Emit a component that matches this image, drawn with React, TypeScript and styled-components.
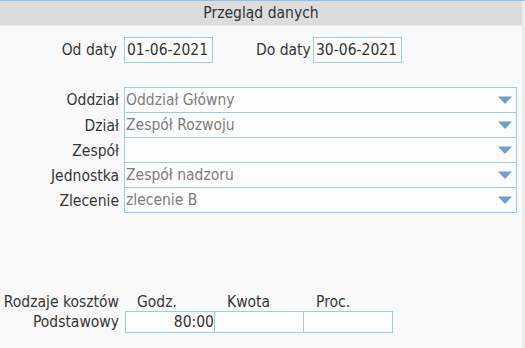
import React from "react";
import styled, { createGlobalStyle } from "styled-components";

const Global = createGlobalStyle`
  html, body { margin: 0; padding: 0; background: #f9f9f9; }
  body {
    font-family: "DejaVu Sans Condensed", "DejaVu Sans", sans-serif;
    font-stretch: semi-condensed;
    font-size: 15.5px;
    line-height: 18px;
    color: #363636;
  }
`;

const Frame = styled.div`
  width: 525px;
  height: 348px;
  box-sizing: border-box;
  border-top: 1px solid #8cc2ee;
  display: flex;
  overflow: hidden;
`;

const Main = styled.div`
  flex: 1;
  display: flex;
  flex-direction: column;
  background: #f9f9f9;
`;

const ScrollStrip = styled.div`
  width: 3px;
  background: #ececec;
`;

const Header = styled.div`
  height: 24px;
  background: #dcdcdc;
  border-bottom: 1px solid #ebebeb;
  display: flex;
  align-items: center;
  justify-content: center;
  color: #333;
`;

const Body = styled.div`
  display: flex;
  flex-direction: column;
  padding-top: 11px;
`;

const DateRow = styled.div`
  display: flex;
  align-items: center;
`;

const Label = styled.div<{ $w?: number }>`
  width: ${(p) => p.$w ?? 117}px;
  text-align: right;
  white-space: nowrap;
  color: #363636;
`;

const DateInput = styled.div<{ $ml?: number }>`
  margin-left: ${(p) => p.$ml ?? 7}px;
  width: 89px;
  height: 26px;
  box-sizing: border-box;
  border: 1px solid #9ccaee;
  background: #fcfcfc;
  padding-left: 2px;
  display: flex;
  align-items: center;
  color: #333;
  white-space: nowrap;
`;

const Spacer = styled.div<{ $w: number }>`
  width: ${(p) => p.$w}px;
`;

const SelectGrid = styled.div`
  margin-top: 24px;
  display: grid;
  grid-template-columns: 119px 393px;
  column-gap: 5px;
`;

const SelectLabel = styled.div`
  height: 25px;
  display: flex;
  align-items: center;
  justify-content: flex-end;
  padding-top: 1px;
  box-sizing: border-box;
  white-space: nowrap;
`;

const SelectBox = styled.div<{ $first?: boolean }>`
  height: 26px;
  box-sizing: border-box;
  border: 1px solid #9ccaee;
  margin-top: ${(p) => (p.$first ? 0 : -1)}px;
  background: #fcfcfc;
  display: flex;
  align-items: center;
  padding-left: 1px;
  padding-right: 4px;
  color: #7d7d7d;
`;

const SelectValue = styled.div`
  flex: 1;
  white-space: nowrap;
`;

const Arrow = () => (
  <svg width="14" height="8" viewBox="0 0 14 8">
    <polygon points="0,0.5 14,0.5 7.5,7.5 6.5,7.5" fill="#6e9fcd" />
  </svg>
);

const Costs = styled.div`
  margin-top: 80px;
  display: flex;
  flex-direction: column;
`;

const CostGrid = styled.div`
  display: grid;
  grid-template-columns: 125px 90px 89px 89px;
`;

const CostHeadCell = styled.div<{ $first?: boolean }>`
  white-space: nowrap;
  text-align: ${(p) => (p.$first ? "right" : "left")};
  padding-left: ${(p) => (p.$first ? 0 : 12)}px;
  padding-right: ${(p) => (p.$first ? 6 : 0)}px;
`;

const CostRow = styled(CostGrid)`
  margin-top: 0px;
`;

const CostLabel = styled.div`
  display: flex;
  align-items: center;
  justify-content: flex-end;
  padding-right: 6px;
  white-space: nowrap;
`;

const Cell = styled.div<{ $first?: boolean }>`
  height: 22px;
  box-sizing: border-box;
  border: 1px solid #9ccaee;
  border-left-width: ${(p) => (p.$first ? 1 : 0)}px;
  background: #fcfcfc;
  display: flex;
  align-items: center;
  justify-content: flex-end;
  color: #333;
`;

const selects = [
  { label: "Oddział", value: "Oddział Główny" },
  { label: "Dział", value: "Zespół Rozwoju" },
  { label: "Zespół", value: "" },
  { label: "Jednostka", value: "Zespół nadzoru" },
  { label: "Zlecenie", value: "zlecenie B" },
];

export default function App() {
  return (
    <>
      <Global />
      <Frame>
        <Main>
          <Header>Przegląd danych</Header>
          <Body>
            <DateRow>
              <Label>Od daty</Label>
              <DateInput>01-06-2021</DateInput>
              <Spacer $w={43} />
              <Label $w={50}>Do daty</Label>
              <DateInput>30-06-2021</DateInput>
            </DateRow>
            <SelectGrid>
              {selects.map((s, i) => (
                <React.Fragment key={s.label}>
                  <SelectLabel>{s.label}</SelectLabel>
                  <SelectBox $first={i === 0}>
                    <SelectValue>{s.value}</SelectValue>
                    <Arrow />
                  </SelectBox>
                </React.Fragment>
              ))}
            </SelectGrid>
            <Costs>
              <CostGrid>
                <CostHeadCell $first>Rodzaje kosztów</CostHeadCell>
                <CostHeadCell>Godz.</CostHeadCell>
                <CostHeadCell>Kwota</CostHeadCell>
                <CostHeadCell>Proc.</CostHeadCell>
              </CostGrid>
              <CostRow>
                <CostLabel>Podstawowy</CostLabel>
                <Cell $first>80:00</Cell>
                <Cell />
                <Cell />
              </CostRow>
            </Costs>
          </Body>
        </Main>
        <ScrollStrip />
      </Frame>
    </>
  );
}
